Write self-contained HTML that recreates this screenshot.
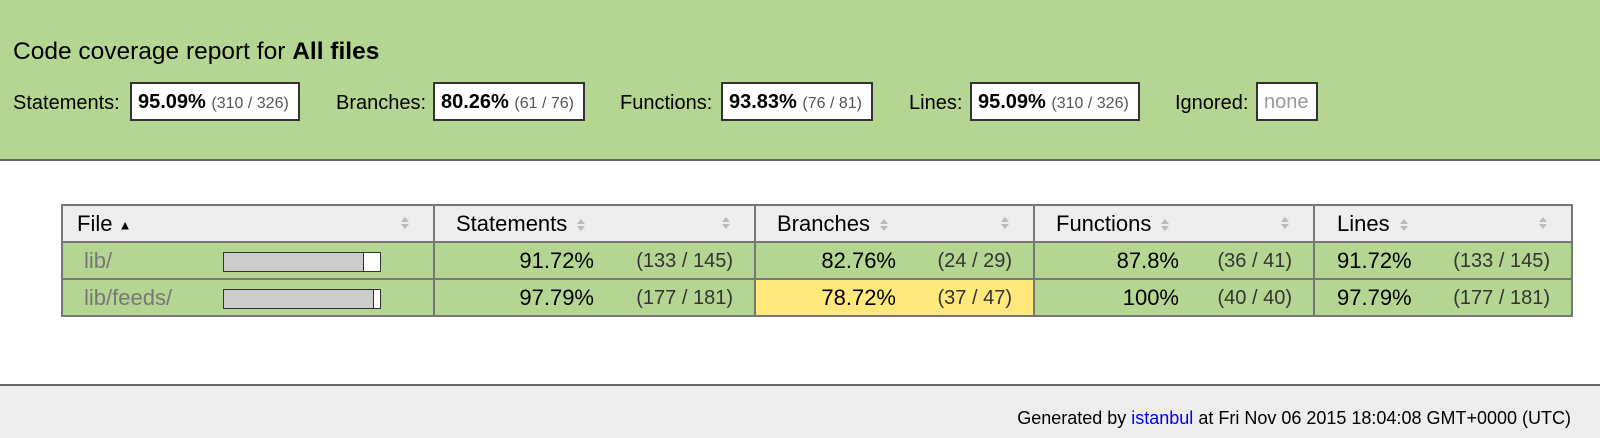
<!DOCTYPE html>
<html><head><style>
*{margin:0;padding:0;box-sizing:border-box}
body{width:1600px;height:438px;position:relative;font-family:"Liberation Sans",Arial,sans-serif;background:#fff;color:#000;overflow:hidden}
.hdr{position:absolute;left:0;top:0;width:1600px;height:161px;background:#b5d592;border-bottom:2px solid #666}
.title{position:absolute;left:13px;top:38px;font-size:24.5px}
.lbl{position:absolute;top:92px;font-size:20px}
.box{position:absolute;top:82px;height:39px;border:2px solid #333;background:#fff;font-size:20px;padding:7px 6px 0;white-space:nowrap}
.box span{font-size:16px;color:#555}
table{position:absolute;left:61px;top:204px;border-collapse:collapse;font-size:22px;table-layout:fixed}
td,th{border:2px solid #777;height:37px;padding:0 21px 0 14px;font-weight:normal;text-align:left;white-space:nowrap}
td:first-child{padding-left:21px}
th{background:#eee;padding:0 23px 0 21px}
th:first-child{padding-left:14px}
tr.r td{background:#b5d592}
.g{color:#777}
.f{display:flex;align-items:center}
.f .fr{margin-left:auto;color:#333;font-size:20px;position:relative;top:1px}
.p{display:inline-block;text-align:right}
.sort{float:right;margin-top:4px}
.si{vertical-align:middle;margin-left:9px}
.bar{display:inline-block;width:158px;height:20px;border:1px solid #333;background:#fff;vertical-align:middle;position:relative}
.bar i{position:absolute;left:0;top:0;bottom:0;background:#ccc;border-right:1px solid #333}
.ft{position:absolute;left:0;top:384px;width:1600px;height:54px;background:#eee;border-top:2px solid #666;font-size:18px}
.ft div{position:absolute;right:29px;top:22px}
a{color:#00f}
</style></head><body>
<svg width="0" height="0" style="position:absolute"><defs><symbol id="s" viewBox="0 0 10 16"><path d="M1 7 L5 2 L9 7Z M1 9 L5 14 L9 9Z" fill="#bbb"/></symbol></defs></svg>
<div class="hdr">
<div class="title">Code coverage report for <b>All files</b></div>
<div class="lbl" style="left:13px">Statements:</div>
<div class="box" style="left:130px;width:170px"><b>95.09%</b> <span>(310 / 326)</span></div>
<div class="lbl" style="left:336px">Branches:</div>
<div class="box" style="left:433px;width:152px"><b>80.26%</b> <span>(61 / 76)</span></div>
<div class="lbl" style="left:620px">Functions:</div>
<div class="box" style="left:721px;width:152px"><b>93.83%</b> <span>(76 / 81)</span></div>
<div class="lbl" style="left:909px">Lines:</div>
<div class="box" style="left:970px;width:170px"><b>95.09%</b> <span>(310 / 326)</span></div>
<div class="lbl" style="left:1175px">Ignored:</div>
<div class="box" style="left:1256px;width:62px;color:#999">none</div>
</div>
<table>
<colgroup><col style="width:372px"><col style="width:321px"><col style="width:279px"><col style="width:280px"><col style="width:258px"></colgroup>
<tr><th>File <span style="font-size:13px;vertical-align:middle">▲</span><svg class="sort" width="10" height="16"><use href="#s"/></svg></th>
<th>Statements<svg class="si" width="10" height="16"><use href="#s"/></svg><svg class="sort" width="10" height="16"><use href="#s"/></svg></th>
<th>Branches<svg class="si" width="10" height="16"><use href="#s"/></svg><svg class="sort" width="10" height="16"><use href="#s"/></svg></th>
<th>Functions<svg class="si" width="10" height="16"><use href="#s"/></svg><svg class="sort" width="10" height="16"><use href="#s"/></svg></th>
<th style="padding-left:22px">Lines<svg class="si" width="10" height="16"><use href="#s"/></svg><svg class="sort" width="10" height="16"><use href="#s"/></svg></th></tr>
<tr class="r"><td><span class="g" style="display:inline-block;width:139px">lib/</span><span class="bar"><i style="width:140px"></i></span></td>
<td><div class="f"><span class="p" style="width:145px">91.72%</span><span class="fr">(133 / 145)</span></div></td>
<td><div class="f"><span class="p" style="width:126px">82.76%</span><span class="fr">(24 / 29)</span></div></td>
<td><div class="f"><span class="p" style="width:130px">87.8%</span><span class="fr">(36 / 41)</span></div></td>
<td style="padding-left:22px"><div class="f"><span>91.72%</span><span class="fr">(133 / 145)</span></div></td></tr>
<tr class="r"><td><span class="g" style="display:inline-block;width:139px">lib/feeds/</span><span class="bar"><i style="width:150px"></i></span></td>
<td><div class="f"><span class="p" style="width:145px">97.79%</span><span class="fr">(177 / 181)</span></div></td>
<td style="background:#ffe87c"><div class="f"><span class="p" style="width:126px">78.72%</span><span class="fr">(37 / 47)</span></div></td>
<td><div class="f"><span class="p" style="width:130px">100%</span><span class="fr">(40 / 40)</span></div></td>
<td style="padding-left:22px"><div class="f"><span>97.79%</span><span class="fr">(177 / 181)</span></div></td></tr>
</table>
<div class="ft"><div>Generated by <a>istanbul</a> at Fri Nov 06 2015 18:04:08 GMT+0000 (UTC)</div></div>
</body></html>
